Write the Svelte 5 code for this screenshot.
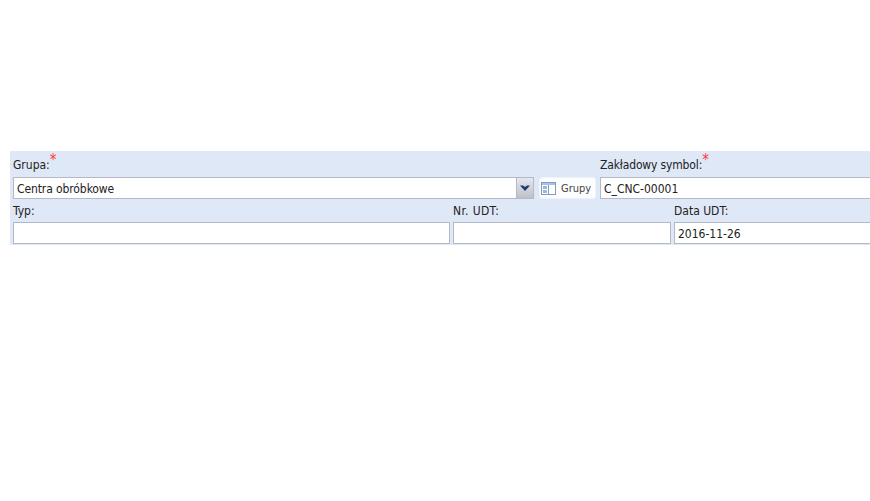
<script>
  const requiredMark = '*';
</script>

<div class="page">
  <form class="panel">
    <div class="row first">
      <div class="field group">
        <label>Grupa:<span class="req">{requiredMark}</span></label>
        <div class="combo-line">
          <div class="combo">
            <span class="value">Centra obróbkowe</span>
            <span class="trigger">
              <svg width="10" height="6" viewBox="0 0 10 6"><path d="M0 0.5 H3 L5 2 L7 0.5 H10 L5 6 Z" fill="#1d3a6e" /></svg>
            </span>
          </div>
          <button type="button" class="btn">
            <svg width="15" height="13" viewBox="0 0 15 13">
              <rect x="0.5" y="0.5" width="14" height="12" fill="#fff" stroke="#7f9cc6" />
              <rect x="1" y="1" width="13" height="2" fill="#a9c1e2" />
              <rect x="2" y="4" width="4" height="3" fill="#9db8dc" />
              <rect x="2" y="8" width="4" height="3" fill="#9db8dc" />
              <line x1="7.5" y1="3" x2="7.5" y2="12" stroke="#7f9cc6" />
            </svg>
            <span>Grupy</span>
          </button>
        </div>
      </div>
      <div class="field symbol">
        <label>Zakładowy symbol:<span class="req">{requiredMark}</span></label>
        <div class="input">C_CNC-00001</div>
      </div>
    </div>
    <div class="row second">
      <div class="field typ">
        <label>Typ:</label>
        <div class="input"></div>
      </div>
      <div class="field udt">
        <label>Nr. UDT:</label>
        <div class="input"></div>
      </div>
      <div class="field date">
        <label>Data UDT:</label>
        <div class="input">2016-11-26</div>
      </div>
    </div>
  </form>
</div>

<style>
  :global(body) {
    margin: 0;
    background: #fff;
    overflow: hidden;
  }

  .page {
    width: 870px;
    height: 501px;
    overflow: hidden;
    padding: 151px 0 0 10px;
    box-sizing: border-box;
    font-family: "DejaVu Sans Condensed", "DejaVu Sans", sans-serif;
    font-stretch: condensed;
    font-size: 12px;
    color: #222;
  }

  .panel {
    width: 900px;
    height: 94px;
    background: #dfe8f6;
    box-sizing: border-box;
    padding-left: 3px;
  }

  .row {
    display: flex;
  }

  .first {
    height: 48px;
    gap: 4px;
  }

  .second {
    height: 46px;
    gap: 3px;
  }

  .field {
    display: flex;
    flex-direction: column;
    flex: none;
  }

  .field label {
    height: 26px;
    display: flex;
    align-items: flex-end;
    line-height: 18px;
    padding-bottom: 3px;
    box-sizing: border-box;
  }

  .second .field label {
    height: 23px;
    align-items: flex-start;
    line-height: 16px;
    padding: 4px 0 0;
  }

  .symbol label {
    letter-spacing: -0.15px;
  }

  .udt label {
    letter-spacing: 0.35px;
  }

  .req {
    color: #ff4040;
    font-size: 15px;
    line-height: 12px;
    align-self: flex-start;
    margin-top: 3px;
  }

  .group { width: 583px; }
  .symbol { width: 300px; }
  .typ { width: 437px; }
  .udt { width: 218px; }
  .date { width: 230px; }

  .combo-line {
    display: flex;
    gap: 5px;
    height: 22px;
  }

  .combo {
    width: 521px;
    display: flex;
    justify-content: space-between;
    background: #fff;
    border: 1px solid #b5b8c8;
    box-sizing: border-box;
  }

  .value {
    padding: 1px 0 0 3px;
    line-height: 20px;
    letter-spacing: -0.1px;
  }

  .trigger {
    width: 16px;
    display: flex;
    align-items: center;
    justify-content: center;
    background: linear-gradient(to bottom, #e4e8ef, #bfc1c6);
    border-left: 1px solid #b5b8c8;
  }

  .btn {
    width: 57px;
    height: 22px;
    padding: 0 0 0 1px;
    display: flex;
    align-items: center;
    gap: 5px;
    background: #fcfdfe;
    border: 1px solid #f0f4fa;
    border-radius: 3px;
    font: inherit;
    font-size: 11px;
    color: #444;
    box-sizing: border-box;
  }

  .input {
    height: 22px;
    background: #fff;
    border: 1px solid #b5b8c8;
    box-sizing: border-box;
    padding: 1px 0 0 3px;
    line-height: 20px;
  }
</style>
